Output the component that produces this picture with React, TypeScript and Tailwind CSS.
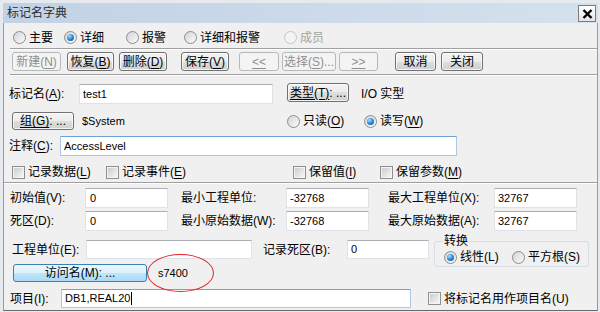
import type { ReactNode } from "react";
import clsx from "clsx";

// Win7 "basic" style dialog: 标记名字典

function U({ children }: { children: ReactNode }) {
  return <span className="underline underline-offset-[2px] decoration-1">{children}</span>;
}

function Radio({
  label,
  checked = false,
  disabled = false,
  className = "",
}: {
  label: ReactNode;
  checked?: boolean;
  disabled?: boolean;
  className?: string;
}) {
  return (
    <div className={clsx("flex items-center", className)}>
      <span
        className={clsx(
          "flex h-[13px] w-[13px] shrink-0 items-center justify-center rounded-full border",
          disabled
            ? "border-[#c6c6c6] bg-[#f4f4f4]"
            : "border-[#8c8c8c] bg-[linear-gradient(135deg,#d4d4d4,#fbfbfb)]"
        )}
      >
        {checked && (
          <span className="h-[7px] w-[7px] rounded-full bg-[radial-gradient(circle_at_35%_30%,#a4deff,#2382d8_55%,#0d4a8e)]" />
        )}
      </span>
      <span
        className={clsx(
          "ml-[3px] whitespace-nowrap text-[12px] leading-[14px]",
          disabled ? "text-[#a3a3a3]" : "text-black"
        )}
      >
        {label}
      </span>
    </div>
  );
}

function Check({ label, className = "" }: { label: ReactNode; className?: string }) {
  return (
    <div className={clsx("flex items-center", className)}>
      <span className="flex h-[13px] w-[13px] shrink-0 border border-[#8e8f8f] bg-[#f4f4f4] p-px">
        <span className="h-full w-full bg-[linear-gradient(135deg,#cdcdcd,#f6f6f6)]" />
      </span>
      <span className="ml-[3px] whitespace-nowrap text-[12px] leading-[14px] text-black">{label}</span>
    </div>
  );
}

function Btn({
  children,
  className = "",
  disabled = false,
  primary = false,
}: {
  children: ReactNode;
  className?: string;
  disabled?: boolean;
  primary?: boolean;
}) {
  return (
    <div
      className={clsx(
        "flex shrink-0 items-center justify-center whitespace-nowrap rounded-[3px] border text-[12px] leading-none",
        disabled
          ? "border-[#b5b9bc] bg-[#f4f4f4] text-[#8f8f8f]"
          : primary
          ? "border-[#3c7fb1] bg-[linear-gradient(#ecf7fd,#dcf1fc_50%,#c2e5f9_50%,#aadaf4)] text-black"
          : "border-[#707070] bg-[linear-gradient(#f3f3f3,#ececec_50%,#dedede_50%,#d0d0d0)] text-black shadow-[inset_0_0_0_1px_rgba(255,255,255,0.75)]",
        className
      )}
    >
      {children}
    </div>
  );
}

function Field({
  value = "",
  className = "",
  focus = false,
  caret = false,
}: {
  value?: string;
  className?: string;
  focus?: boolean;
  caret?: boolean;
}) {
  return (
    <div
      className={clsx(
        "flex shrink-0 items-center border bg-white pl-[3px] text-[11px] leading-none text-black",
        focus ? "border-[#a9c9e6] border-t-[#6ea2d2]" : "border-[#dfe2e8] border-t-[#abadb3]",
        className
      )}
    >
      {value}
      {caret && <span className="ml-px h-[13px] w-px bg-black" />}
    </div>
  );
}

function Sep({ className = "" }: { className?: string }) {
  return (
    <div className={clsx("flex flex-col", className)}>
      <div className="h-px bg-[#a0a0a0]" />
      <div className="h-px bg-white" />
    </div>
  );
}

export default function App() {
  return (
    <div className="flex h-[312px] w-[600px] flex-col overflow-hidden bg-[#e6eaef] pt-[3px] pr-[2px] pb-px pl-[3px] font-['Liberation_Sans','Noto_Sans_CJK_SC',sans-serif] text-black">
      {/* title bar */}
      <div className="flex h-[20px] shrink-0 items-start justify-between bg-[linear-gradient(90deg,#c2d2e4,#d4e1ee)] pr-[2px] pl-[4px]">
        <span className="mt-[3px] text-[12px] leading-[14px] text-[#2a2a2a]">标记名字典</span>
        <div className="mt-[2px] flex h-[17px] w-[18px] items-center justify-center border border-[#7c7c7c] bg-[linear-gradient(#ffffff,#e4e4e4)]">
          <svg width="11" height="10" viewBox="0 0 11 10">
            <path d="M1.5 1 L9.5 9 M9.5 1 L1.5 9" stroke="#000" strokeWidth="2.4" />
          </svg>
        </div>
      </div>

      {/* body */}
      <div className="flex flex-1 flex-col border-x border-b border-x-[#9a9a9a] border-b-[#6a6a6a] bg-[#f0f0f0]">
        {/* tabs as radios */}
        <div className="flex h-[25px] items-center pt-[4px] pl-[9px]">
          <Radio label="主要" className="w-[51px]" />
          <Radio label="详细" checked className="w-[62px]" />
          <Radio label="报警" className="w-[58px]" />
          <Radio label="详细和报警" className="w-[100px]" />
          <Radio label="成员" disabled />
        </div>

        <Sep className="ml-[6px]" />

        {/* toolbar */}
        <div className="mt-[2px] flex h-[19px] pl-[8px]">
          <Btn disabled className="w-[49px]">新建(<U>N</U>)</Btn>
          <Btn className="ml-[6px] w-[47px]">恢复(<U>B</U>)</Btn>
          <Btn className="ml-[5px] w-[48px]">删除(<U>D</U>)</Btn>
          <Btn className="ml-[14px] w-[48px]">保存(<U>V</U>)</Btn>
          <Btn disabled className="ml-[10px] w-[40px]"><U>&lt;&lt;</U></Btn>
          <Btn disabled className="ml-[3px] w-[54px]">选择(<U>S</U>)...</Btn>
          <Btn disabled className="ml-[3px] w-[39px]"><U>&gt;&gt;</U></Btn>
          <Btn className="ml-[17px] w-[41px]">取消</Btn>
          <Btn className="ml-[5px] w-[42px]">关闭</Btn>
        </div>

        <Sep className="mt-[3px] ml-[6px]" />

        {/* 标记名 */}
        <div className="mt-[8px] flex h-[20px] items-start">
          <span className="ml-[5px] w-[70px] self-center text-[12px] leading-[14px]">标记名(<U>A</U>):</span>
          <Field value="test1" className="h-[20px] w-[194px]" />
          <Btn className="-mt-px ml-[14px] h-[19px] w-[62px]"><U>类型(T)</U>: ...</Btn>
          <span className="ml-[12px] self-center text-[12px] leading-[14px]">I/O 实型</span>
        </div>

        {/* 组 */}
        <div className="mt-[8px] flex h-[18px] items-center">
          <Btn className="ml-[8px] h-[18px] w-[62px]"><U>组(G)</U>: ...</Btn>
          <span className="ml-[8px] w-[205px] text-[11px] leading-[14px]">$System</span>
          <Radio label={<>只读(<U>O</U>)</>} className="w-[77px]" />
          <Radio label={<>读写(<U>W</U>)</>} checked />
        </div>

        {/* 注释 */}
        <div className="mt-[6px] flex h-[20px] items-center">
          <span className="ml-[5px] w-[51px] text-[12px] leading-[14px]">注释(<U>C</U>):</span>
          <Field value="AccessLevel" focus className="h-[20px] w-[397px]" />
        </div>

        {/* options */}
        <div className="mt-[7px] flex h-[18px] items-center">
          <Check label={<>记录数据(<U>L</U>)</>} className="ml-[8px] w-[94px]" />
          <Check label={<>记录事件(<U>E</U>)</>} className="w-[187px]" />
          <Check label={<>保留值(<U>I</U>)</>} className="w-[87px]" />
          <Check label={<>保留参数(<U>M</U>)</>} />
        </div>

        <Sep className="mt-px" />

        {/* 初始值 */}
        <div className="mt-[4px] flex h-[20px] items-center text-[12px] leading-[14px]">
          <span className="ml-[6px] w-[75px]">初始值(V):</span>
          <Field value="0" className="h-[20px] w-[83px] pl-[4px]" />
          <span className="w-[118px] pl-[13px]">最小工程单位:</span>
          <Field value="-32768" className="h-[20px] w-[83px]" />
          <span className="w-[125px] pl-[19px]">最大工程单位(X):</span>
          <Field value="32767" className="h-[20px] w-[83px]" />
        </div>

        {/* 死区 */}
        <div className="mt-[3px] flex h-[20px] items-center text-[12px] leading-[14px]">
          <span className="ml-[6px] w-[75px]">死区(D):</span>
          <Field value="0" className="h-[20px] w-[83px] pl-[4px]" />
          <span className="w-[118px] pl-[13px]">最小原始数据(W):</span>
          <Field value="-32768" className="h-[20px] w-[83px]" />
          <span className="w-[125px] pl-[19px]">最大原始数据(A):</span>
          <Field value="32767" className="h-[20px] w-[83px]" />
        </div>

        {/* 工程单位 + 转换 */}
        <div className="mt-[9px] flex h-[19px] items-start text-[12px] leading-[14px]">
          <span className="ml-[8px] mt-[3px] w-[74px]">工程单位(E):</span>
          <Field className="h-[19px] w-[166px]" />
          <span className="mt-[3px] w-[95px] pl-[11px]">记录死区(B):</span>
          <Field value="0" className="h-[19px] w-[82px]" />
          <div className="relative ml-[5px] mt-px h-[26px] w-[155px] shrink-0 rounded-[3px] border border-[#d5dfe5] pt-[8px] pl-[9px]">
            <span className="absolute -top-[8px] left-[8px] bg-[#f0f0f0] px-px text-[12px] leading-[14px]">转换</span>
            <div className="flex h-[14px] items-center">
              <Radio label="线性(L)" checked className="w-[68px]" />
              <Radio label="平方根(S)" />
            </div>
          </div>
        </div>

        {/* 访问名 */}
        <div className="relative mt-[5px] flex h-[18px] items-center">
          <Btn primary className="ml-[9px] h-[18px] w-[134px]">访问名(M): ...</Btn>
          <span className="ml-[11px] text-[11px] leading-[14px]">s7400</span>
          <div className="pointer-events-none absolute -top-[10px] left-[143px] h-[38px] w-[67px] rounded-[50%] border border-[#e0242a]" />
        </div>

        {/* 项目 */}
        <div className="mt-[7px] flex h-[19px] items-center">
          <span className="ml-[6px] w-[51px] text-[12px] leading-[14px]">项目(I):</span>
          <Field value="DB1,REAL20" caret focus className="h-[19px] w-[350px]" />
          <Check label="将标记名用作项目名(U)" className="ml-[17px]" />
        </div>
      </div>
    </div>
  );
}
